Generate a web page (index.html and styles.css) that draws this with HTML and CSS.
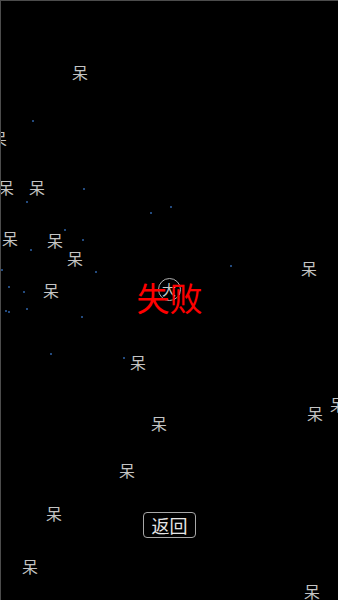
FILE: index.html
```html
<!DOCTYPE html>
<html lang="zh">
<head>
<meta charset="utf-8">
<title>失败</title>
<link rel="stylesheet" href="styles.css">
</head>
<body>
<div class="stage">
  <div class="field">
    <span class="dot" style="left:32px;top:120px"></span>
    <span class="dot" style="left:83px;top:188px"></span>
    <span class="dot" style="left:26px;top:201px"></span>
    <span class="dot" style="left:64px;top:229px"></span>
    <span class="dot" style="left:82px;top:239px"></span>
    <span class="dot" style="left:30px;top:249px"></span>
    <span class="dot" style="left:1px;top:269px"></span>
    <span class="dot" style="left:95px;top:271px"></span>
    <span class="dot" style="left:8px;top:286px"></span>
    <span class="dot" style="left:23px;top:291px"></span>
    <span class="dot" style="left:5px;top:310px"></span>
    <span class="dot" style="left:8px;top:311px"></span>
    <span class="dot" style="left:26px;top:308px"></span>
    <span class="dot" style="left:81px;top:316px"></span>
    <span class="dot" style="left:150px;top:212px"></span>
    <span class="dot" style="left:170px;top:206px"></span>
    <span class="dot" style="left:230px;top:265px"></span>
    <span class="dot" style="left:50px;top:353px"></span>
    <span class="dot" style="left:123px;top:357px"></span>

    <span class="dai" style="left:80px;top:72px">呆</span>
    <span class="dai" style="left:-1px;top:138px">呆</span>
    <span class="dai" style="left:6px;top:187px">呆</span>
    <span class="dai" style="left:37px;top:187px">呆</span>
    <span class="dai" style="left:10px;top:238px">呆</span>
    <span class="dai" style="left:55px;top:240px">呆</span>
    <span class="dai" style="left:75px;top:258px">呆</span>
    <span class="dai" style="left:51px;top:290px">呆</span>
    <span class="dai" style="left:309px;top:268px">呆</span>
    <span class="dai" style="left:138px;top:362px">呆</span>
    <span class="dai" style="left:159px;top:423px">呆</span>
    <span class="dai" style="left:315px;top:413px">呆</span>
    <span class="dai" style="left:338px;top:404px">呆</span>
    <span class="dai" style="left:127px;top:470px">呆</span>
    <span class="dai" style="left:54px;top:513px">呆</span>
    <span class="dai" style="left:30px;top:566px">呆</span>
    <span class="dai" style="left:312px;top:591px">呆</span>
  </div>

  <div class="overlay">
    <div class="result">
      <span class="badge">大</span>
      <span class="result-text">失败</span>
    </div>
    <button class="back">返回</button>
  </div>
</div>
</body>
</html>
```

FILE: styles.css
```css
html, body {
  margin: 0;
  padding: 0;
  background: #000;
  overflow: hidden;
}

body {
  font-family: "Noto Sans CJK SC", "Noto Sans", sans-serif;
}

.stage {
  position: relative;
  width: 340px;
  height: 600px;
  box-sizing: border-box;
  border-top: 1px solid #4c4c4c;
  border-left: 1px solid #4c4c4c;
  background: #000;
  overflow: hidden;
}

.field {
  position: absolute;
  inset: -1px 0 0 -1px;
}

.dot {
  position: absolute;
  width: 2px;
  height: 2px;
  border-radius: 1px;
  background: #2f63a8;
}

.dai {
  position: absolute;
  transform: translate(-50%, -50%);
  font-size: 16px;
  line-height: 16px;
  color: #c4c4c4;
}

.overlay {
  position: absolute;
  inset: 0;
  display: flex;
  flex-direction: column;
  align-items: center;
  padding-top: 280px;
  padding-right: 2px;
}

.result {
  position: relative;
  display: flex;
  justify-content: center;
}

.badge {
  position: absolute;
  left: 50%;
  top: -3px;
  width: 23px;
  height: 23px;
  margin-left: -12px;
  box-sizing: border-box;
  border: 1px solid #b0b0b0;
  border-radius: 50%;
  color: #c8c8c8;
  font-size: 14px;
  line-height: 21px;
  text-align: center;
}

.result-text {
  position: relative;
  font-size: 33px;
  line-height: 33px;
  color: #ff0000;
}

.back {
  margin-top: 198px;
  width: 53px;
  height: 26px;
  padding: 0;
  box-sizing: border-box;
  border: 1px solid #a8a8a8;
  border-radius: 4px;
  background: #000;
  color: #e6e6e6;
  font-family: "Noto Sans CJK SC", sans-serif;
  font-size: 18px;
  line-height: 24px;
}
```
